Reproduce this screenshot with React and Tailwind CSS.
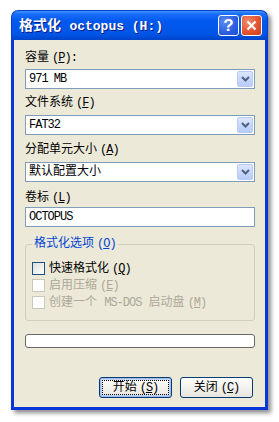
import React from "react";

const L = ({ children, className = "" }) => (
  <span className={"text-[12px] tracking-[-1px] " + className}>{children}</span>
);

const Acc = ({ k }) => (
  <L className="ml-[3px]">
    (<span className="underline underline-offset-1">{k}</span>)
  </L>
);

const Arrow = () => (
  <div className="absolute right-[1px] top-[1px] bottom-[1px] w-[16px] rounded-[2px] border border-[#b9cbf3] bg-gradient-to-b from-[#dce6fc] to-[#b7cbf9] flex items-center justify-center">
    <svg width="9" height="6" viewBox="0 0 9 6">
      <path d="M1 1 L4.5 4.5 L8 1" stroke="#4d6185" strokeWidth="2" fill="none" />
    </svg>
  </div>
);

const Combo = ({ children }) => (
  <div className="relative h-[20px] border border-[#7f9db9] bg-white flex items-center pl-[3px]">
    {children}
    <Arrow />
  </div>
);

const Check = ({ disabled }) => (
  <div
    className={
      "w-[13px] h-[13px] border " +
      (disabled
        ? "border-[#cac8bb] bg-white"
        : "border-[#1c5180] bg-gradient-to-br from-[#dcdcd7] to-white")
    }
  />
);

const Btn = ({ children, def }) => (
  <div
    className={
      "w-[73px] h-[21px] rounded-[3px] border border-[#003c74] bg-gradient-to-b from-white to-[#e6e4dc] flex items-center justify-center " +
      (def ? "shadow-[inset_0_0_0_1px_#9fbcef,inset_0_0_0_2px_#c1d4f6]" : "")
    }
  >
    {def ? (
      <div className="w-[67px] h-[15px] border border-dotted border-black flex items-center justify-center">
        {children}
      </div>
    ) : (
      children
    )}
  </div>
);

export default function App() {
  return (
    <div className="w-[279px] h-[422px] bg-white pl-[11px] pt-[10px] font-['Liberation_Mono','Noto_Sans_CJK_SC',monospace] text-[12px] leading-[14px] text-black">
      <div className="w-[257px] h-[400px] rounded-t-[7px] flex flex-col shadow-[3px_3px_4px_rgba(0,0,0,0.45)]">
        {/* title bar */}
        <div className="h-[30px] rounded-t-[7px] bg-[linear-gradient(to_bottom,#3d95ff_0%,#1a6ef8_10%,#0058ee_35%,#0055e6_80%,#0043c8_100%)] flex items-center pl-[7px] pr-[5px] border-t border-x border-[#0a3fc8]">
          <div className="flex-1 text-white font-bold text-[14px] leading-[16px] pt-[1px] [text-shadow:1px_1px_0_#0a1883] whitespace-nowrap">
            格式化 <span className="text-[13px] tracking-[0px]">octopus (H:)</span>
          </div>
          <div className="flex gap-[2px]">
            <div className="w-[21px] h-[21px] rounded-[3px] border border-white bg-[radial-gradient(circle_at_30%_30%,#5b8cf2,#2c5ee0_60%,#1d4fd3)] flex items-center justify-center text-white font-['Liberation_Sans',sans-serif] font-bold text-[17px]">
              ?
            </div>
            <div className="w-[21px] h-[21px] rounded-[3px] border border-white bg-[radial-gradient(circle_at_30%_30%,#f28a6b,#e2502c_60%,#c9401f)] flex items-center justify-center">
              <svg width="11" height="11" viewBox="0 0 11 11">
                <path d="M1.5 1.5 L9.5 9.5 M9.5 1.5 L1.5 9.5" stroke="white" strokeWidth="2.2" />
              </svg>
            </div>
          </div>
        </div>
        {/* client */}
        <div className="flex-1 border-x-[3px] border-b-[3px] border-[#0836d8] bg-[#ece9d8] pl-[11px] pr-[10px] pt-[11px] flex flex-col">
          <div className="h-[14px]">
            容量<Acc k="P" />
            <L>:</L>
          </div>
          <div className="mt-[4px]">
            <Combo>
              <L>971 MB</L>
            </Combo>
          </div>
          <div className="h-[14px] mt-[7px]">
            文件系统<Acc k="F" />
          </div>
          <div className="mt-[5px]">
            <Combo>
              <L>FAT32</L>
            </Combo>
          </div>
          <div className="h-[14px] mt-[8px]">
            分配单元大小<Acc k="A" />
          </div>
          <div className="mt-[5px]">
            <Combo>默认配置大小</Combo>
          </div>
          <div className="h-[14px] mt-[9px]">
            卷标<Acc k="L" />
          </div>
          <div className="mt-[2px] h-[20px] border border-[#7f9db9] bg-white flex items-center pl-[3px]">
            <L>OCTOPUS</L>
          </div>
          {/* group */}
          <div className="relative mt-[17px] h-[77px] border border-[#d0d0bf] rounded-[3px] pt-[15px] pl-[6px] flex flex-col">
            <div className="absolute left-[6px] top-[-8px] px-[2px] bg-[#ece9d8] text-[#0046d5] leading-[14px]">
              格式化选项<Acc k="O" />
            </div>
            <div className="h-[17px] flex items-center gap-[4px]">
              <Check />
              <span>
                快速格式化<Acc k="Q" />
              </span>
            </div>
            <div className="h-[17px] flex items-center gap-[4px] text-[#aca899]">
              <Check disabled />
              <span>
                启用压缩<Acc k="E" />
              </span>
            </div>
            <div className="h-[17px] flex items-center gap-[4px] text-[#aca899]">
              <Check disabled />
              <span>
                创建一个 <L>MS-DOS</L> 启动盘<Acc k="M" />
              </span>
            </div>
          </div>
          <div className="mt-[13px] h-[14px] rounded-[3px] border border-[#686868] bg-white" />
          <div className="mt-[29px] flex justify-end gap-[8px] pr-[2px]">
            <Btn def>
              开始<Acc k="S" />
            </Btn>
            <Btn>
              关闭<Acc k="C" />
            </Btn>
          </div>
        </div>
      </div>
    </div>
  );
}
